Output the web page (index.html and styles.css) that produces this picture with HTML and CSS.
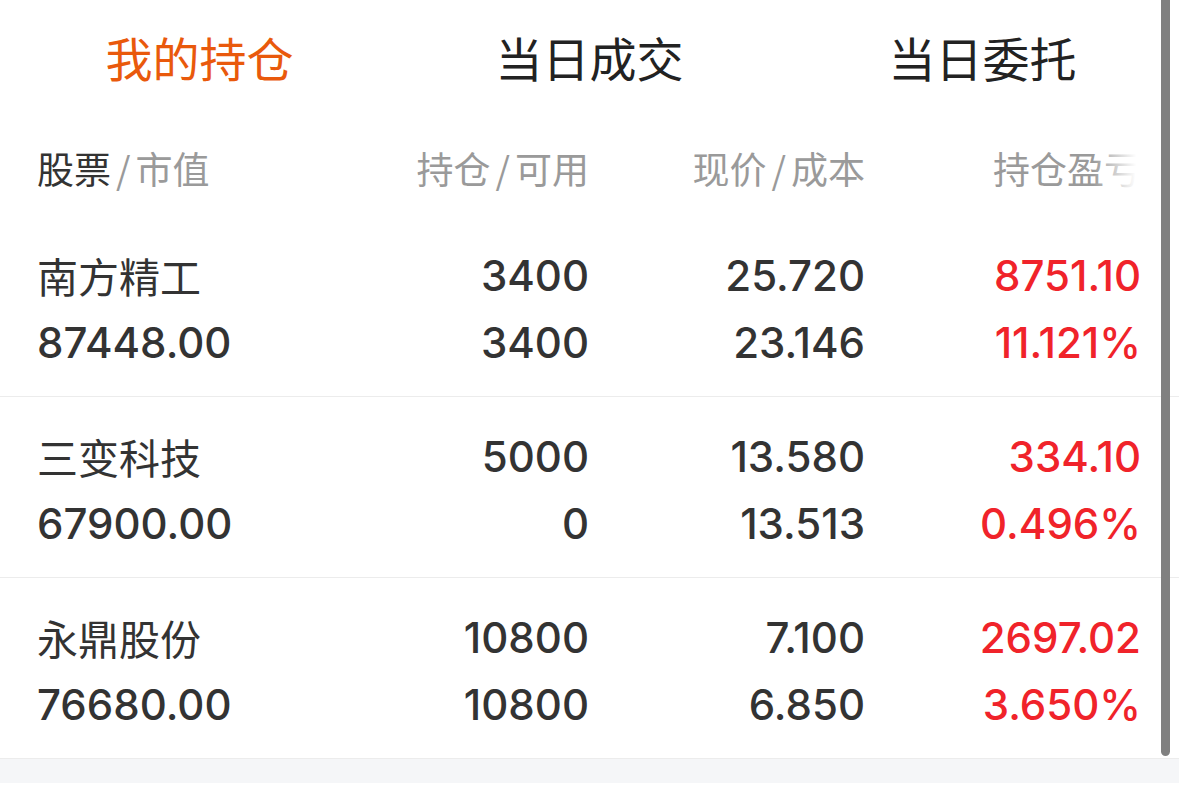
FILE: index.html
```html
<!DOCTYPE html>
<html lang="zh-CN">
<head>
  <meta charset="UTF-8" />
  <title>我的持仓</title>
  <meta name="viewport" content="width=device-width, initial-scale=1.0" />
  <link rel="stylesheet" href="styles.css">
</head>
<body>
  <div class="page">
    <!-- Tabs -->
    <nav class="tabs">
      <a class="tab active" href="#">我的持仓</a>
      <a class="tab" href="#">当日成交</a>
      <a class="tab" href="#">当日委托</a>
    </nav>

    <!-- Positions -->
    <section class="positions">
      <div class="head">
        <div class="cell left"><span class="dark">股票</span><span class="sep">/</span>市值</div>
        <div class="cell">持仓<span class="sep">/</span>可用</div>
        <div class="cell">现价<span class="sep">/</span>成本</div>
        <div class="cell fade">持仓盈亏</div>
      </div>

      <div class="row">
        <div class="cell left">
          <div class="name">南方精工</div>
          <div class="num">87448.00</div>
        </div>
        <div class="cell">
          <div class="num">3400</div>
          <div class="num">3400</div>
        </div>
        <div class="cell">
          <div class="num">25.720</div>
          <div class="num">23.146</div>
        </div>
        <div class="cell up">
          <div class="num">8751.10</div>
          <div class="num">11.121%</div>
        </div>
      </div>

      <div class="row">
        <div class="cell left">
          <div class="name">三变科技</div>
          <div class="num">67900.00</div>
        </div>
        <div class="cell">
          <div class="num">5000</div>
          <div class="num">0</div>
        </div>
        <div class="cell">
          <div class="num">13.580</div>
          <div class="num">13.513</div>
        </div>
        <div class="cell up">
          <div class="num">334.10</div>
          <div class="num">0.496%</div>
        </div>
      </div>

      <div class="row">
        <div class="cell left">
          <div class="name">永鼎股份</div>
          <div class="num">76680.00</div>
        </div>
        <div class="cell">
          <div class="num">10800</div>
          <div class="num">10800</div>
        </div>
        <div class="cell">
          <div class="num">7.100</div>
          <div class="num">6.850</div>
        </div>
        <div class="cell up">
          <div class="num">2697.02</div>
          <div class="num">3.650%</div>
        </div>
      </div>
    </section>

    <div class="footer-band"></div>

    <div class="scrollbar"></div>
  </div>
</body>
</html>
```

FILE: styles.css
```css
:root {
  --orange: #e9590c;
  --text: #333333;
  --title: #222222;
  --gray: #9a9a9a;
  --red: #f0232a;
  --line: #ececec;
  --band: #f5f6f8;
}

* { box-sizing: border-box; }

body {
  margin: 0;
  background: #fff;
  font-family: Inter, "Noto Sans CJK SC", sans-serif;
  color: var(--text);
}

.page {
  position: relative;
  width: 1179px;
  min-height: 806px;
}

/* tabs */
.tabs {
  display: grid;
  grid-template-columns: repeat(3, 1fr);
  height: 120px;
  align-items: center;
  padding-bottom: 8px;
}

.tab {
  text-align: center;
  font-family: "Noto Sans CJK SC", sans-serif;
  font-size: 47px;
  line-height: 1;
  color: var(--title);
  text-decoration: none;
}

.tab.active {
  color: var(--orange);
  padding-left: 6px;
}

/* table */
.head,
.row {
  display: grid;
  grid-template-columns: repeat(4, 1fr);
  padding: 0 38px 0 37px;
}

.head {
  height: 96px;
  padding-top: 0;
  align-items: center;
  font-family: "Noto Sans CJK SC", sans-serif;
  font-size: 37px;
  color: var(--gray);
}

.head .dark { color: var(--text); }

.sep { margin: 0 5px; }

.cell { text-align: right; }
.cell.left { text-align: left; }

.fade { position: relative; }

.fade::after {
  content: "";
  position: absolute;
  right: 0;
  top: 0;
  bottom: 0;
  width: 48px;
  background: linear-gradient(to right, rgba(255, 255, 255, 0), #fff 90%);
}

.row {
  padding-top: 26px;
  padding-bottom: 20px;
  border-bottom: 1px solid var(--line);
  line-height: 67px;
}

.name {
  font-family: "Noto Sans CJK SC", sans-serif;
  font-size: 41px;
}

.num {
  font-size: 42px;
  font-weight: 500;
  white-space: nowrap;
}

.up { color: var(--red); }

.footer-band {
  height: 24px;
  background: var(--band);
}

/* overlay scrollbar */
.scrollbar {
  position: absolute;
  top: 0;
  left: 1161px;
  width: 9px;
  height: 756px;
  background: #808080;
  border-radius: 0 0 5px 5px;
}
```
